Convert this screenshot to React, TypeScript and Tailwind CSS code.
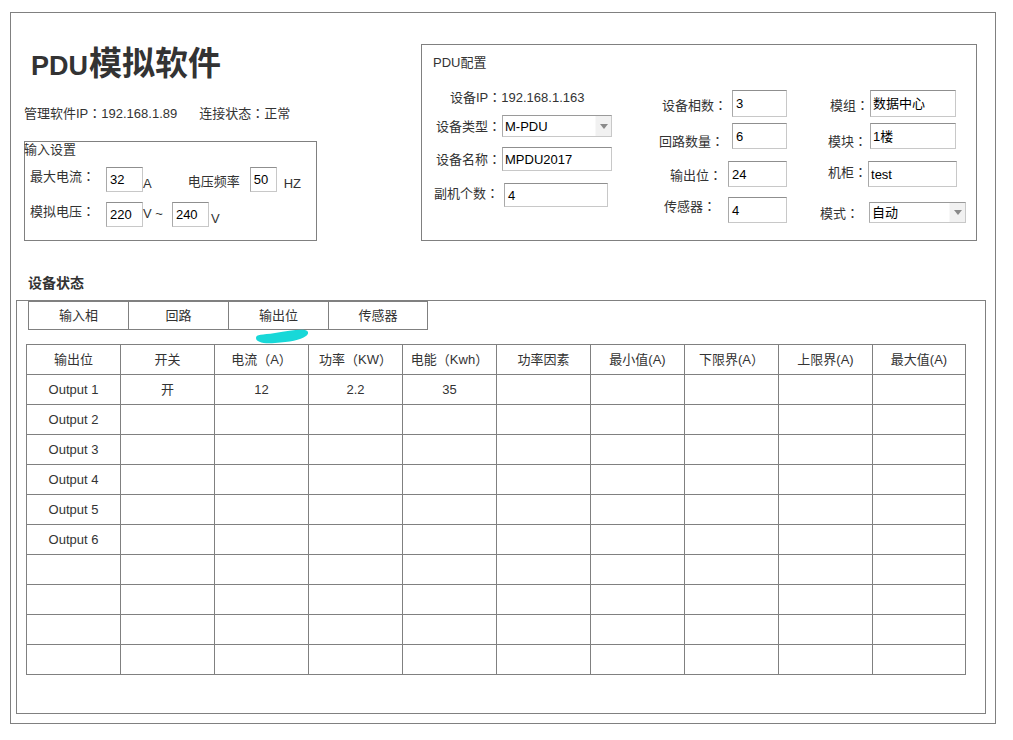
import React from "react";

function fw(s: string): React.ReactNode {
  const parts = s.split(/([：（）])/);
  return parts.map((p, i) =>
    p === "：" || p === "（" || p === "）" ? (
      <span key={i} className="font-['Noto_Sans_CJK_TC',sans-serif]">
        {p}
      </span>
    ) : (
      <React.Fragment key={i}>{p}</React.Fragment>
    )
  );
}

const inputCls =
  "flex items-center px-[2px] border border-[#c8c8c8] border-t-[#8f8f8f] border-l-[#a9a9a9] bg-white text-black text-[13px] leading-none";

function Box({ w, h, children, className = "" }: { w: string; h: string; children?: React.ReactNode; className?: string }) {
  return <div className={`${inputCls} ${w} ${h} ${className}`}>{children}</div>;
}

function Select({ w, h, value }: { w: string; h: string; value: string }) {
  return (
    <div className={`flex ${w} ${h} border border-[#c8c8c8] border-t-[#9a9a9a] border-l-[#ababab] bg-white text-black text-[13px]`}>
      <div className="flex-1 flex items-center pl-[2px] leading-none">{value}</div>
      <div className="w-[16px] bg-[#f1f1f1] border-l border-l-[#f8f8f8] flex items-center justify-center">
        <span className="w-0 h-0 border-l-[4px] border-r-[4px] border-t-[5px] border-l-transparent border-r-transparent border-t-[#8a8a8a]" />
      </div>
    </div>
  );
}

const headers = ["输出位", "开关", "电流（A）", "功率（KW）", "电能（Kwh）", "功率因素", "最小值(A)", "下限界(A）", "上限界(A)", "最大值(A)"];

const rows: string[][] = [
  ["Output 1", "开", "12", "2.2", "35", "", "", "", "", ""],
  ["Output 2", "", "", "", "", "", "", "", "", ""],
  ["Output 3", "", "", "", "", "", "", "", "", ""],
  ["Output 4", "", "", "", "", "", "", "", "", ""],
  ["Output 5", "", "", "", "", "", "", "", "", ""],
  ["Output 6", "", "", "", "", "", "", "", "", ""],
  ["", "", "", "", "", "", "", "", "", ""],
  ["", "", "", "", "", "", "", "", "", ""],
  ["", "", "", "", "", "", "", "", "", ""],
  ["", "", "", "", "", "", "", "", "", ""],
];

export default function App() {
  return (
    <div className="relative w-[1013px] h-[740px] bg-white pt-[12px] pl-[10px] text-[13px] text-[#333] font-['Liberation_Sans','Noto_Sans_CJK_SC',sans-serif]">
      <div className="w-[986px] h-[712px] border border-[#808080]">
        {/* top section */}
        <div className="flex items-start">
          {/* left */}
          <div className="w-[410px] pl-[13px] flex flex-col">
            <div className="mt-[30px] ml-[7px] h-[36px] leading-[36px] font-bold text-[33px] text-[#333] whitespace-nowrap">
              <span className="text-[27px] font-['Liberation_Sans',sans-serif]">PDU</span>
              <span className="ml-[1px] font-['Noto_Sans_CJK_SC',sans-serif]">模拟软件</span>
            </div>
            <div className="mt-[25px] leading-[18px] h-[18px] whitespace-nowrap">
              <span>{fw("管理软件IP：192.168.1.89")}</span>
              <span className="ml-[22px]">{fw("连接状态：正常")}</span>
            </div>
            <div className="mt-[19px] w-[293px] h-[100px] border border-[#808080] flex flex-col">
              <div className="-ml-[1px] leading-[16px] h-[16px]">输入设置</div>
              <div className="mt-[9px] h-[25px] flex items-start pl-[5px]">
                <span className="mt-[1px] leading-[16px]">{fw("最大电流：")}</span>
                <Box w="w-[37px]" h="h-[25px]" className="ml-[11px] pl-[3px]">32</Box>
                <span className="self-end leading-[16px]">A</span>
                <span className="ml-[36px] mt-[7px] leading-[16px]">电压频率</span>
                <Box w="w-[27px]" h="h-[25px]" className="ml-[10px] pl-[3px]">50</Box>
                <span className="ml-[7px] self-end leading-[16px]">HZ</span>
              </div>
              <div className="mt-[10px] h-[25px] flex items-start pl-[5px]">
                <span className="mt-[1px] leading-[16px]">{fw("模拟电压：")}</span>
                <Box w="w-[37px]" h="h-[25px]" className="ml-[11px] pl-[3px]">220</Box>
                <span className="mt-[4px] leading-[16px] whitespace-pre">V ~</span>
                <Box w="w-[37px]" h="h-[25px]" className="ml-[9px] pl-[3px]">240</Box>
                <span className="ml-[2px] self-end leading-[16px]">V</span>
              </div>
            </div>
          </div>

          {/* PDU config */}
          <div className="mt-[31px] w-[556px] h-[197px] border border-[#808080] flex">
            {/* col1 */}
            <div className="w-[218px] flex flex-col">
              <div className="mt-[9px] ml-[11px] leading-[18px] h-[18px]">PDU配置</div>
              <div className="mt-[16px] ml-[28px] leading-[18px] h-[18px]">{fw("设备IP：192.168.1.163")}</div>
              <div className="mt-[9px] ml-[14px] h-[22px] flex items-center">
                <span>{fw("设备类型：")}</span>
                <div className="ml-[1px]"><Select w="w-[110px]" h="h-[22px]" value="M-PDU" /></div>
              </div>
              <div className="mt-[10px] ml-[14px] h-[24px] flex items-center">
                <span>{fw("设备名称：")}</span>
                <Box w="w-[110px]" h="h-[24px]" className="ml-[1px]">MPDU2017</Box>
              </div>
              <div className="mt-[12px] ml-[12px] h-[24px] flex items-start">
                <span className="mt-[1px] leading-[18px]">{fw("副机个数：")}</span>
                <Box w="w-[104px]" h="h-[24px]" className="ml-[5px] pl-[3px]">4</Box>
              </div>
            </div>
            {/* col2 */}
            <div className="w-[160px] flex flex-col">
              <div className="mt-[45px] ml-[22px] h-[27px] flex items-start">
                <span className="mt-[6px] leading-[18px]">{fw("设备相数：")}</span>
                <Box w="w-[55px]" h="h-[27px]" className="ml-[5px] pl-[3px]">3</Box>
              </div>
              <div className="mt-[6px] ml-[19px] h-[26px] flex items-start">
                <span className="mt-[9px] leading-[18px]">{fw("回路数量：")}</span>
                <Box w="w-[55px]" h="h-[26px]" className="ml-[8px] pl-[3px]">6</Box>
              </div>
              <div className="mt-[12px] ml-[30px] h-[26px] flex items-start">
                <span className="mt-[5px] leading-[18px]">{fw("输出位：")}</span>
                <Box w="w-[59px]" h="h-[26px]" className="ml-[6px] pl-[3px]">24</Box>
              </div>
              <div className="mt-[10px] ml-[24px] h-[26px] flex items-start">
                <span className="mt-[0px] leading-[18px]">{fw("传感器：")}</span>
                <Box w="w-[59px]" h="h-[26px]" className="ml-[12px] pl-[3px]">4</Box>
              </div>
            </div>
            {/* col3 */}
            <div className="flex-1 flex flex-col">
              <div className="mt-[45px] ml-[30px] h-[27px] flex items-start">
                <span className="mt-[6px] leading-[18px]">{fw("模组：")}</span>
                <Box w="w-[86px]" h="h-[27px]" className="ml-[1px]">数据中心</Box>
              </div>
              <div className="mt-[6px] ml-[28px] h-[26px] flex items-start">
                <span className="mt-[9px] leading-[18px]">{fw("模块：")}</span>
                <Box w="w-[86px]" h="h-[26px]" className="ml-[3px]">1楼</Box>
              </div>
              <div className="mt-[12px] ml-[28px] h-[26px] flex items-start">
                <span className="mt-[2px] leading-[18px]">{fw("机柜：")}</span>
                <Box w="w-[89px]" h="h-[26px]" className="ml-[1px]">test</Box>
              </div>
              <div className="mt-[15px] ml-[20px] h-[21px] flex items-start">
                <span className="mt-[2px] leading-[18px]">{fw("模式：")}</span>
                <div className="ml-[10px]"><Select w="w-[97px]" h="h-[21px]" value="自动" /></div>
              </div>
            </div>
          </div>
        </div>

        {/* device status */}
        <div className="mt-[33px] ml-[17px] h-[18px] leading-[18px] text-[14px] font-bold text-[#333]">设备状态</div>
        <div className="mt-[8px] ml-[5px] w-[970px] h-[414px] border border-[#808080] flex flex-col">
          <div className="ml-[11px] flex h-[29px]">
            {["输入相", "回路", "输出位", "传感器"].map((t, i) => (
              <div
                key={t}
                className={`w-[100px] h-[29px] flex items-center justify-center border-t border-b border-l border-[#808080] ${i === 3 ? "border-r" : ""}`}
              >
                {t}
              </div>
            ))}
          </div>
          <div className="mt-[14px] ml-[9px] grid grid-cols-[repeat(9,94px)_93px] border-l border-t border-[#808080] w-max">
            {headers.map((h) => (
              <div key={h} className="h-[30px] flex items-center justify-center border-r border-b border-[#808080] whitespace-nowrap">
                {fw(h)}
              </div>
            ))}
            {rows.map((r, ri) =>
              r.map((c, ci) => (
                <div key={`${ri}-${ci}`} className="h-[30px] flex items-center justify-center border-r border-b border-[#808080] whitespace-nowrap">
                  {c}
                </div>
              ))
            )}
          </div>
        </div>
      </div>

      {/* annotation brush stroke */}
      <svg className="absolute left-[250px] top-[325px]" width="65" height="25" viewBox="250 325 65 25">
        <path
          d="M256,338 C256,334 262,335 275,333 C288,331 298,329 305,330 C309,331 309,334 306,336 C300,340 290,342 275,343 C263,344 256,342 256,338 Z"
          fill="#18d8d8"
        />
      </svg>
    </div>
  );
}
